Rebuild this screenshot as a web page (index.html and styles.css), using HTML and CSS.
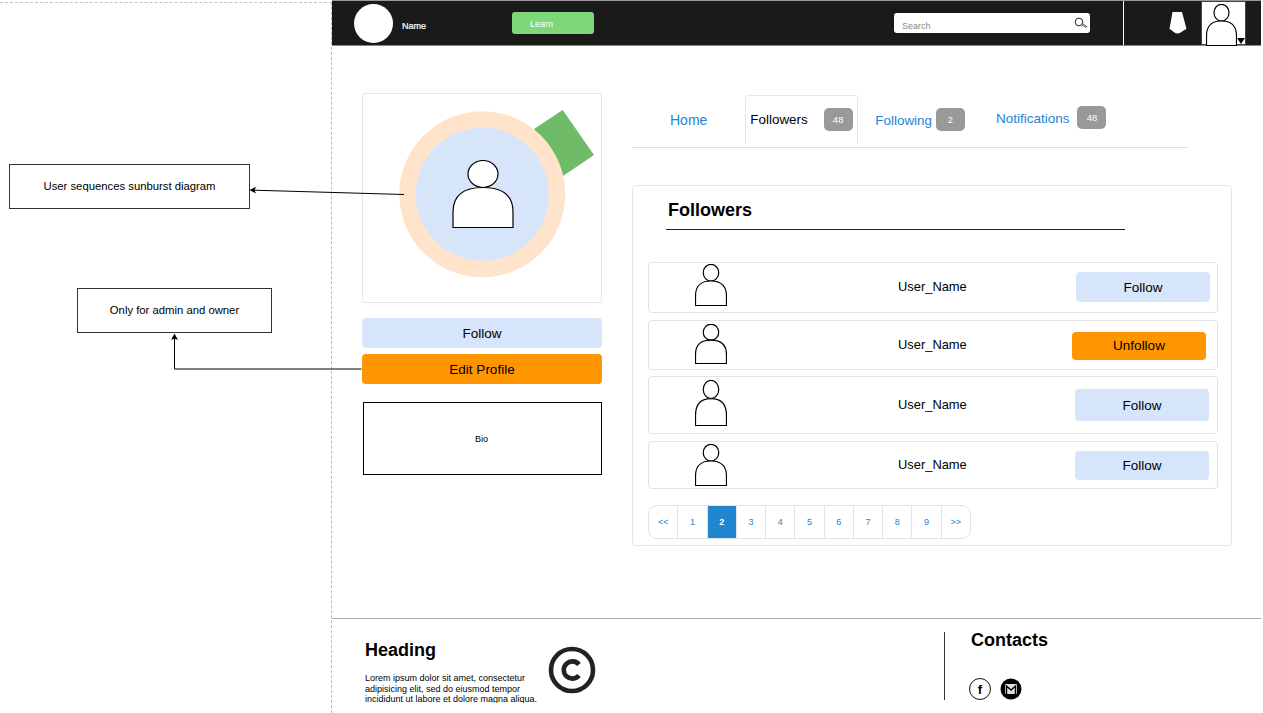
FILE: index.html
```html
<!DOCTYPE html>
<html lang="en">

<head>
  <title>User Followers Wireframe</title>
  <meta charset="utf-8">
  <meta name="viewport" content="width=device-width, initial-scale=1.0">
  <link rel="stylesheet" href="styles.css">
</head>

<body>
  <svg class="defs" width="0" height="0">
    <symbol id="person" viewBox="0 0 62 68" preserveAspectRatio="none">
      <ellipse cx="31" cy="14" rx="15" ry="13.5" fill="#fff" stroke="#000" stroke-width="1.2" vector-effect="non-scaling-stroke"/>
      <path d="M1 67.5 V52 C1 35 11 27.5 31 27.5 C51 27.5 61 35 61 52 V67.5 Z" fill="#fff" stroke="#000" stroke-width="1.2" vector-effect="non-scaling-stroke"/>
    </symbol>
  </svg>

  <div class="canvas">
    <!-- notes beside the wireframe -->
    <aside class="notes">
      <div class="note note-sunburst">User sequences sunburst diagram</div>
      <div class="note note-admin">Only for admin and owner</div>
    </aside>

    <div class="app">
      <header class="topbar">
        <div class="topbar-logo"></div>
        <span class="topbar-name">Name</span>
        <a class="learn-button">Learn</a>
        <div class="search">
          <span>Search</span>
          <svg class="search-icon" width="14" height="12" viewBox="0 0 14 12">
            <circle cx="5" cy="5" r="3.8" fill="#fff" stroke="#222" stroke-width="1"/>
            <path d="M8 6.5 L13 9.5 L12 10.5 L7.5 7.5 Z" fill="#fff" stroke="#333" stroke-width="0.8"/>
          </svg>
        </div>
        <div class="topbar-divider"></div>
        <svg class="bell" width="18" height="22" viewBox="0 0 18 22">
          <path d="M3.5 0 H13 L17.5 17 C14 18 12 21.5 8.5 21.5 C5 21.5 3.5 18 0.5 17 Z" fill="#fff"/>
        </svg>
        <div class="topbar-user">
          <svg class="topbar-person"><use href="#person"/></svg>
          <span class="caret"></span>
        </div>
      </header>

      <main class="content">
        <section class="side">
          <div class="photo-card">
            <svg class="sunburst" width="240" height="210" viewBox="0 0 240 210">
              <polygon points="200.7,17 232,62 201,83 172,36" fill="#6fbb68"/>
              <circle cx="120.3" cy="101.3" r="83" fill="#ffe4cb"/>
              <circle cx="120.3" cy="101.3" r="66.5" fill="#d7e5fb"/>
            </svg>
            <svg class="photo-person"><use href="#person"/></svg>
          </div>
          <button class="side-button follow-button">Follow</button>
          <button class="side-button edit-button">Edit Profile</button>
          <div class="bio">Bio</div>
        </section>

        <section class="follow-area">
          <nav class="tabs">
            <a class="tab tab-home">Home</a>
            <a class="tab tab-active">Followers <span class="badge">48</span></a>
            <a class="tab tab-following">Following <span class="badge">2</span></a>
            <a class="tab tab-notifications">Notifications <span class="badge">48</span></a>
          </nav>

          <div class="panel">
            <h2 class="panel-title">Followers</h2>

            <div class="user-row row-one">
              <svg class="row-person"><use href="#person"/></svg>
              <span class="user-name">User_Name</span>
              <button class="row-button">Follow</button>
            </div>
            <div class="user-row row-two">
              <svg class="row-person"><use href="#person"/></svg>
              <span class="user-name">User_Name</span>
              <button class="row-button unfollow">Unfollow</button>
            </div>
            <div class="user-row row-three">
              <svg class="row-person"><use href="#person"/></svg>
              <span class="user-name">User_Name</span>
              <button class="row-button">Follow</button>
            </div>
            <div class="user-row row-four">
              <svg class="row-person"><use href="#person"/></svg>
              <span class="user-name">User_Name</span>
              <button class="row-button">Follow</button>
            </div>

            <div class="pagination">
              <a>&lt;&lt;</a>
              <a>1</a>
              <a class="current">2</a>
              <a>3</a>
              <a>4</a>
              <a>5</a>
              <a>6</a>
              <a>7</a>
              <a>8</a>
              <a>9</a>
              <a>&gt;&gt;</a>
            </div>
          </div>
        </section>
      </main>

      <footer class="footer">
        <div class="footer-about">
          <div class="footer-text">
            <h3 class="footer-heading">Heading</h3>
            <p class="footer-lorem">Lorem ipsum dolor sit amet, consectetur adipisicing elit, sed do eiusmod tempor incididunt ut labore et dolore magna aliqua.</p>
          </div>
          <svg class="copyright" width="48" height="48" viewBox="0 0 48 48">
            <circle cx="24" cy="24" r="21" fill="none" stroke="#222" stroke-width="4.6"/>
            <path d="M31 18.5 A8.6 8.6 0 1 0 31 29.5" fill="none" stroke="#222" stroke-width="4.6"/>
          </svg>
        </div>
        <div class="footer-divider"></div>
        <div class="contacts">
          <h3 class="footer-heading">Contacts</h3>
          <div class="contact-icons">
            <span class="icon-facebook">f</span>
            <svg width="22" height="22" viewBox="0 0 22 22">
              <circle cx="11" cy="11" r="10.5" fill="#000"/>
              <rect x="5" y="6" width="12" height="10" rx="1" fill="#ddd"/>
              <path d="M6.5 16 V8 L11 12 L15.5 8 V16" fill="none" stroke="#000" stroke-width="1.4"/>
            </svg>
          </div>
        </div>
      </footer>
    </div>

    <!-- arrows from the wireframe to the notes -->
    <svg class="arrows" width="1263" height="713" viewBox="0 0 1263 713">
      <path d="M404 194.5 L254 190.2" fill="none" stroke="#000" stroke-width="1"/>
      <path d="M249.5 190 L256 186.8 L254.5 190.2 L256 193.5 Z" fill="#000"/>
      <path d="M361.5 369 H174.5 V338" fill="none" stroke="#000" stroke-width="1"/>
      <path d="M174.5 333.5 L178 340 L174.5 338.5 L171 340 Z" fill="#000"/>
    </svg>
  </div>
</body>

</html>
```

FILE: styles.css
```css
* {
  box-sizing: border-box;
}

body {
  margin: 0;
  font-family: "Liberation Sans", Arial, sans-serif;
  background-color: #fff;
  color: #000;
}

button {
  font-family: inherit;
  border: none;
  padding: 0;
  color: #000;
}

.defs {
  display: block;
  height: 0;
}

.canvas {
  position: relative;
  display: flex;
  height: 713px;
  overflow: hidden;
}

/* notes */
.notes {
  position: relative;
  width: 332px;
  flex-shrink: 0;
  border-top: 1px dashed #c4c4c4;
  border-right: 1px dashed #bbb;
  margin-top: 2px;
}

.note {
  position: absolute;
  display: flex;
  align-items: center;
  justify-content: center;
  height: 45px;
  padding-bottom: 1px;
  border: 1px solid #333;
  background-color: #fff;
  font-size: 11.3px;
}

.note-sunburst {
  left: 9px;
  top: 161px;
  width: 241px;
}

.note-admin {
  left: 77px;
  top: 285px;
  width: 195px;
}

.arrows {
  position: absolute;
  left: 0;
  top: 0;
  pointer-events: none;
}

.app {
  width: 929px;
  display: flex;
  flex-direction: column;
}

/* top bar */
.topbar {
  display: flex;
  align-items: center;
  height: 46px;
  padding: 0 15px 0 22px;
  background-color: #1a1a1a;
  border-top: 1px solid #999;
  border-bottom: 1px solid #888;
}

.topbar-logo {
  width: 39px;
  height: 39px;
  border-radius: 50%;
  background-color: #fff;
}

.topbar-name {
  margin-left: 9px;
  margin-top: 6px;
  width: 24px;
  color: #fff;
  font-size: 9px;
  -webkit-text-stroke: 0.2px #fff;
}

.learn-button {
  display: block;
  width: 82px;
  height: 22px;
  margin-left: 86px;
  margin-top: -1px;
  padding: 7px 0 0 18px;
  border-radius: 3px;
  background-color: #7ed87a;
  color: #fff;
  font-size: 9px;
}

.search {
  position: relative;
  width: 196px;
  height: 20px;
  margin-left: auto;
  margin-right: 1px;
  padding: 8px 0 0 8px;
  border-radius: 3px;
  background-color: #fff;
  color: #888;
  font-size: 9px;
}

.search-icon {
  position: absolute;
  right: 2px;
  top: 4px;
}

.topbar-divider {
  width: 1px;
  height: 44px;
  margin-left: 32px;
  background-color: #fff;
}

.bell {
  margin-left: 45px;
}

.topbar-user {
  position: relative;
  width: 45px;
  height: 44px;
  margin-left: 14px;
  background-color: #fff;
  border: 1px solid #444;
}

.topbar-person {
  position: absolute;
  left: 4px;
  top: 2px;
  width: 31px;
  height: 42px;
}

.caret {
  position: absolute;
  right: 0;
  bottom: 0;
  width: 0;
  height: 0;
  border-left: 4px solid transparent;
  border-right: 4px solid transparent;
  border-top: 6px solid #000;
}

/* main */
.content {
  display: flex;
  gap: 30px;
  height: 572px;
  padding: 47px 0 0 30px;
}

.side {
  width: 240px;
}

.photo-card {
  position: relative;
  height: 210px;
  border: 1px solid #e6e6e6;
  border-radius: 3px;
}

.sunburst {
  position: absolute;
  left: -1px;
  top: -1px;
}

.photo-person {
  position: absolute;
  left: 89px;
  top: 66px;
  width: 62px;
  height: 68px;
}

.side-button {
  display: block;
  width: 100%;
  height: 30px;
  border-radius: 4px;
  font-size: 13.5px;
}

.follow-button {
  margin-top: 15px;
  background-color: #d7e5fb;
}

.edit-button {
  margin-top: 6px;
  background-color: #ff9500;
}

.bio {
  display: flex;
  align-items: center;
  justify-content: center;
  height: 73px;
  margin-top: 18px;
  margin-left: 1px;
  padding-right: 2px;
  border: 1px solid #000;
  font-size: 9px;
}

/* tabs */
.follow-area {
  width: 600px;
  padding-top: 2px;
}

.tabs {
  display: flex;
  align-items: flex-start;
  width: 556px;
  height: 53px;
  border-bottom: 1px solid #e0e0e0;
  font-size: 13.5px;
}

.tab {
  display: flex;
  align-items: center;
  color: #2484d4;
}

.tab-home {
  margin-left: 38px;
  padding-top: 17px;
  font-size: 14px;
}

.tab-active {
  width: 113px;
  height: 49px;
  margin-left: 38px;
  padding-left: 4px;
  padding-bottom: 1px;
  border: 1px solid #e8e8e8;
  border-bottom: none;
  border-radius: 3px 3px 0 0;
  color: #000;
  font-size: 13.4px;
}

.tab-active .badge {
  margin-left: 16px;
}

.tab-following {
  margin-left: 17px;
  padding-top: 15px;
  font-size: 13.4px;
}

.tab-following .badge {
  margin-left: 4px;
  margin-top: -2px;
}

.tab-notifications {
  margin-left: 31px;
  padding-top: 13px;
}

.tab-notifications .badge {
  margin-left: 8px;
  margin-top: -2px;
}

.badge {
  display: flex;
  align-items: center;
  justify-content: center;
  width: 29px;
  height: 23px;
  border-radius: 5px;
  background-color: #999;
  color: #fff;
  font-size: 9.5px;
}

/* followers panel */
.panel {
  height: 361px;
  margin-top: 37px;
  padding: 0 14px 0 15px;
  border: 1px solid #e6e6e6;
  border-radius: 4px;
}

.panel-title {
  width: 459px;
  height: 44px;
  margin: 0 0 32px 18px;
  padding: 14px 0 0 2px;
  border-bottom: 1px solid #222;
  font-size: 18px;
  line-height: 20px;
}

.user-row {
  display: flex;
  align-items: center;
  width: 570px;
  margin-bottom: 7px;
  padding-left: 46px;
  border: 1px solid #e2e2e2;
  border-radius: 4px;
}

.row-person {
  width: 32px;
  height: 42px;
}

.user-name {
  margin-left: 171px;
  width: 178px;
  font-size: 12.9px;
}

.row-button {
  width: 134px;
  height: 30px;
  border-radius: 4px;
  background-color: #d7e5fb;
  font-size: 13.5px;
}

.row-one {
  height: 51px;
}

.row-one .row-person {
  margin-bottom: 5px;
}

.row-one .user-name {
  margin-bottom: 3px;
}

.row-one .row-button {
  margin-bottom: 1px;
}

.row-two {
  height: 50px;
  margin-bottom: 6px;
}

.row-two .row-person {
  height: 40px;
  margin-bottom: 3px;
}

.row-two .user-name {
  margin-bottom: 1px;
}

.row-two .row-button {
  margin-left: -4px;
  height: 28px;
  margin-top: 1px;
}

.row-two .unfollow {
  background-color: #ff9500;
}

.row-three {
  height: 58px;
}

.row-three .row-person {
  height: 46px;
  margin-bottom: 4px;
}

.row-three .user-name {
  margin-bottom: 2px;
}

.row-three .row-button {
  margin-left: -1px;
  height: 32px;
}

.row-four {
  height: 48px;
  margin-bottom: 16px;
}

.row-four .user-name {
  margin-bottom: 2px;
}

.row-four .row-button {
  margin-left: -1px;
  height: 29px;
}

.pagination {
  display: flex;
  width: 323px;
  height: 34px;
  border: 1px solid #e2e2e2;
  border-radius: 9px;
  overflow: hidden;
}

.pagination a {
  flex: 1;
  display: flex;
  align-items: center;
  justify-content: center;
  border-right: 1px solid #e2e2e2;
  color: #2484d4;
  font-size: 9px;
}

.pagination a:last-child {
  border-right: none;
}

.pagination .current {
  margin: -1px 0;
  background-color: #2285d0;
  color: #fff;
  font-weight: bold;
}

/* footer */
.footer {
  display: flex;
  height: 95px;
  border-top: 1px solid #aaa;
}

.footer-about {
  display: flex;
  width: 612px;
  padding-left: 33px;
}

.footer-text {
  width: 183px;
}

.footer-heading {
  margin: 0;
  font-size: 18px;
  line-height: 20px;
}

.footer-text .footer-heading {
  padding-top: 21px;
}

.footer-lorem {
  height: 30px;
  margin: 13px 0 0;
  overflow: hidden;
  font-size: 9px;
  line-height: 10.5px;
}

.copyright {
  margin-top: 27px;
}

.footer-divider {
  width: 1px;
  height: 68px;
  margin-top: 13px;
  background-color: #333;
}

.contacts {
  padding: 11px 0 0 26px;
}

.contact-icons {
  display: flex;
  align-items: center;
  gap: 9px;
  margin-top: 28px;
  margin-left: -2px;
}

.icon-facebook {
  display: flex;
  align-items: center;
  justify-content: center;
  width: 22px;
  height: 22px;
  border: 1px solid #111;
  border-radius: 50%;
  font-size: 13px;
  font-weight: bold;
}
```
